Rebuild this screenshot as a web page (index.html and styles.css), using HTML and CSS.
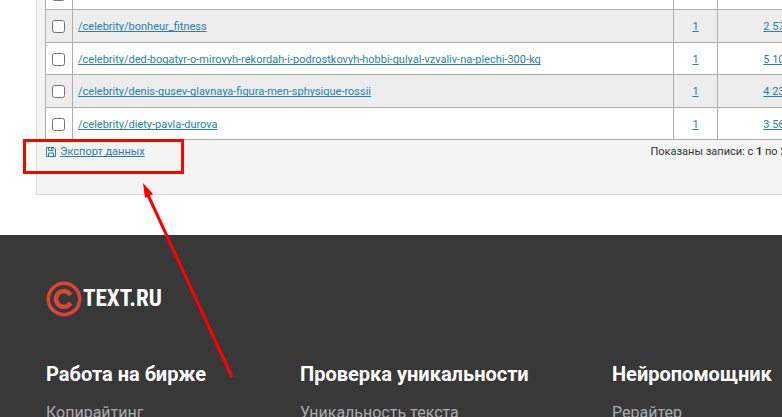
FILE: index.html
```html
<!DOCTYPE html>
<html lang="ru">
<head>
  <meta charset="UTF-8" />
  <meta name="viewport" content="width=device-width, initial-scale=1.0"/>
  <title>TEXT.RU</title>
  <link rel="stylesheet" href="styles.css">
</head>
<body>

  <main class="panel">
    <table class="pages">
      <colgroup>
        <col class="col-check"><col class="col-url"><col class="col-count"><col class="col-size">
      </colgroup>
      <tbody>
        <tr>
          <td class="check"><input type="checkbox" aria-label="Выбрать строку" /></td>
          <td></td>
          <td></td>
          <td></td>
        </tr>
        <tr>
          <td class="check"><input type="checkbox" aria-label="/celebrity/bonheur_fitness" /></td>
          <td><a href="#">/celebrity/bonheur_fitness</a></td>
          <td class="num"><a href="#">1</a></td>
          <td class="num"><a href="#">2 570</a></td>
        </tr>
        <tr>
          <td class="check"><input type="checkbox" aria-label="/celebrity/ded-bogatyr" /></td>
          <td><a href="#">/celebrity/ded-bogatyr-o-mirovyh-rekordah-i-podrostkovyh-hobbi-gulyal-vzvaliv-na-plechi-300-kg</a></td>
          <td class="num"><a href="#">1</a></td>
          <td class="num"><a href="#">5 100</a></td>
        </tr>
        <tr>
          <td class="check"><input type="checkbox" aria-label="/celebrity/denis-gusev" /></td>
          <td><a href="#">/celebrity/denis-gusev-glavnaya-figura-men-sphysique-rossii</a></td>
          <td class="num"><a href="#">1</a></td>
          <td class="num"><a href="#">4 230</a></td>
        </tr>
        <tr>
          <td class="check"><input type="checkbox" aria-label="/celebrity/diety-pavla-durova" /></td>
          <td><a href="#">/celebrity/diety-pavla-durova</a></td>
          <td class="num"><a href="#">1</a></td>
          <td class="num"><a href="#">3 560</a></td>
        </tr>
      </tbody>
    </table>

    <div class="table-footer">
      <a href="#" class="export">
        <svg class="icon-save" viewBox="0 0 10 10" aria-hidden="true">
          <path d="M.5.5h7.500l1.500 1.500v7.500h-9z M2.500.5v3h4.500v-3 M2.500 9.500v-3.500h5v3.500 M5.500 1v1.500"/>
        </svg>
        <span>Экспорт данных</span>
      </a>
      <div class="info">Показаны записи: с <b>1</b> по <b>20</b></div>
    </div>
  </main>

  <footer class="footer">
    <a href="#" class="logo">
      <svg class="logo-mark" viewBox="0 0 36 36" aria-hidden="true">
        <circle cx="18" cy="18" r="15.700"/>
        <path d="M24.500 14a7.800 7.800 0 1 0 0 8"/>
      </svg>
      <span>TEXT.RU</span>
    </a>
    <nav class="menu">
      <section>
        <h3>Работа на бирже</h3>
        <a href="#">Копирайтинг</a>
      </section>
      <section>
        <h3>Проверка уникальности</h3>
        <a href="#">Уникальность текста</a>
      </section>
      <section>
        <h3>Нейропомощник</h3>
        <a href="#">Рерайтер</a>
      </section>
    </nav>
  </footer>

  <!-- red frame and arrow pointing at the export link -->
  <div class="mark-frame"></div>
  <svg class="mark-arrow" viewBox="0 0 92 196" aria-hidden="true">
    <path class="line" d="M90 194L6 12"/>
    <path class="head" d="M1 0L11 11L3 15z"/>
  </svg>

</body>
</html>
```
FILE: styles.css
```css
:root {
  --link: #2980b0;
  --line: #adadad;
  --dark: #383838;
  --mark: #ff0000;
}

* {
  box-sizing: border-box;
}

html,
body {
  height: 100%;
  overflow: hidden;
}

body {
  margin: 0;
  position: relative;
  background-color: #fff;
  color: #333;
  font-family: Roboto, sans-serif;
  font-size: 11px;
}

/* the list is scrolled, the first row is cut by the window */
.panel {
  margin: -24px 0 40px 36px;
  width: 820px;
  padding: 0 8px 34px;
  background-color: #f4f4f4;
  border: 1px solid #dcdcdc;
}

.pages {
  width: 792px;
  table-layout: fixed;
  border-collapse: collapse;
  background-color: #fff;
}

.col-check { width: 27px; }
.col-count { width: 44px; }
.col-size { width: 119px; }

.pages tr {
  height: 33px;
}

.pages tr:nth-child(odd) {
  height: 32px;
}

.pages tr:nth-child(even) {
  background-color: #ededed;
}

.pages td {
  padding: 2px 5px 0;
  border: 1px solid var(--line);
  line-height: 16px;
  white-space: nowrap;
}

.pages .check {
  padding: 1px 6px 0;
}

.check input {
  display: block;
  margin: 0;
  width: 13px;
  height: 13px;
}

.pages .num {
  text-align: center;
}

.panel a {
  color: var(--link);
  text-decoration: underline;
  text-decoration-skip-ink: none;
}

.table-footer {
  display: flex;
  justify-content: space-between;
  padding: 4px 54px 0 1px;
  line-height: 16px;
}

.panel .export {
  display: flex;
  align-items: center;
  gap: 4px;
  text-decoration: none;
}

.export span {
  text-decoration: underline;
}

.icon-save {
  width: 10px;
  height: 10px;
  fill: none;
  stroke: var(--link);
}

.footer {
  min-height: 182px;
  padding: 46px 0 0 46px;
  background-color: var(--dark);
}

.logo {
  display: flex;
  align-items: center;
  gap: 1px;
  color: #fff;
  font-family: "Roboto Condensed", "Liberation Sans Narrow", Roboto, sans-serif;
  font-size: 23px;
  font-weight: bold;
  line-height: 36px;
  text-decoration: none;
}

.logo-mark {
  width: 36px;
  height: 36px;
  fill: none;
  stroke: #dc4437;
  stroke-width: 3.5;
}

.logo-mark path {
  stroke-width: 4.5;
}

.menu {
  display: grid;
  grid-template-columns: 254px 312px auto;
  margin-top: 45px;
}

.menu h3 {
  margin: 0 0 15px;
  color: #fff;
  font-size: 20px;
  line-height: 24px;
  white-space: nowrap;
}

.menu a {
  display: block;
  color: #aaa;
  font-size: 16px;
  line-height: 24px;
  text-decoration: none;
}

.mark-frame {
  position: absolute;
  left: 23px;
  top: 139px;
  width: 161px;
  height: 35px;
  border: 3px solid var(--mark);
}

.mark-arrow {
  position: absolute;
  left: 142px;
  top: 183px;
  width: 92px;
  height: 196px;
}

.mark-arrow .line {
  stroke: var(--mark);
  stroke-width: 3;
}

.mark-arrow .head {
  fill: var(--mark);
}
```
